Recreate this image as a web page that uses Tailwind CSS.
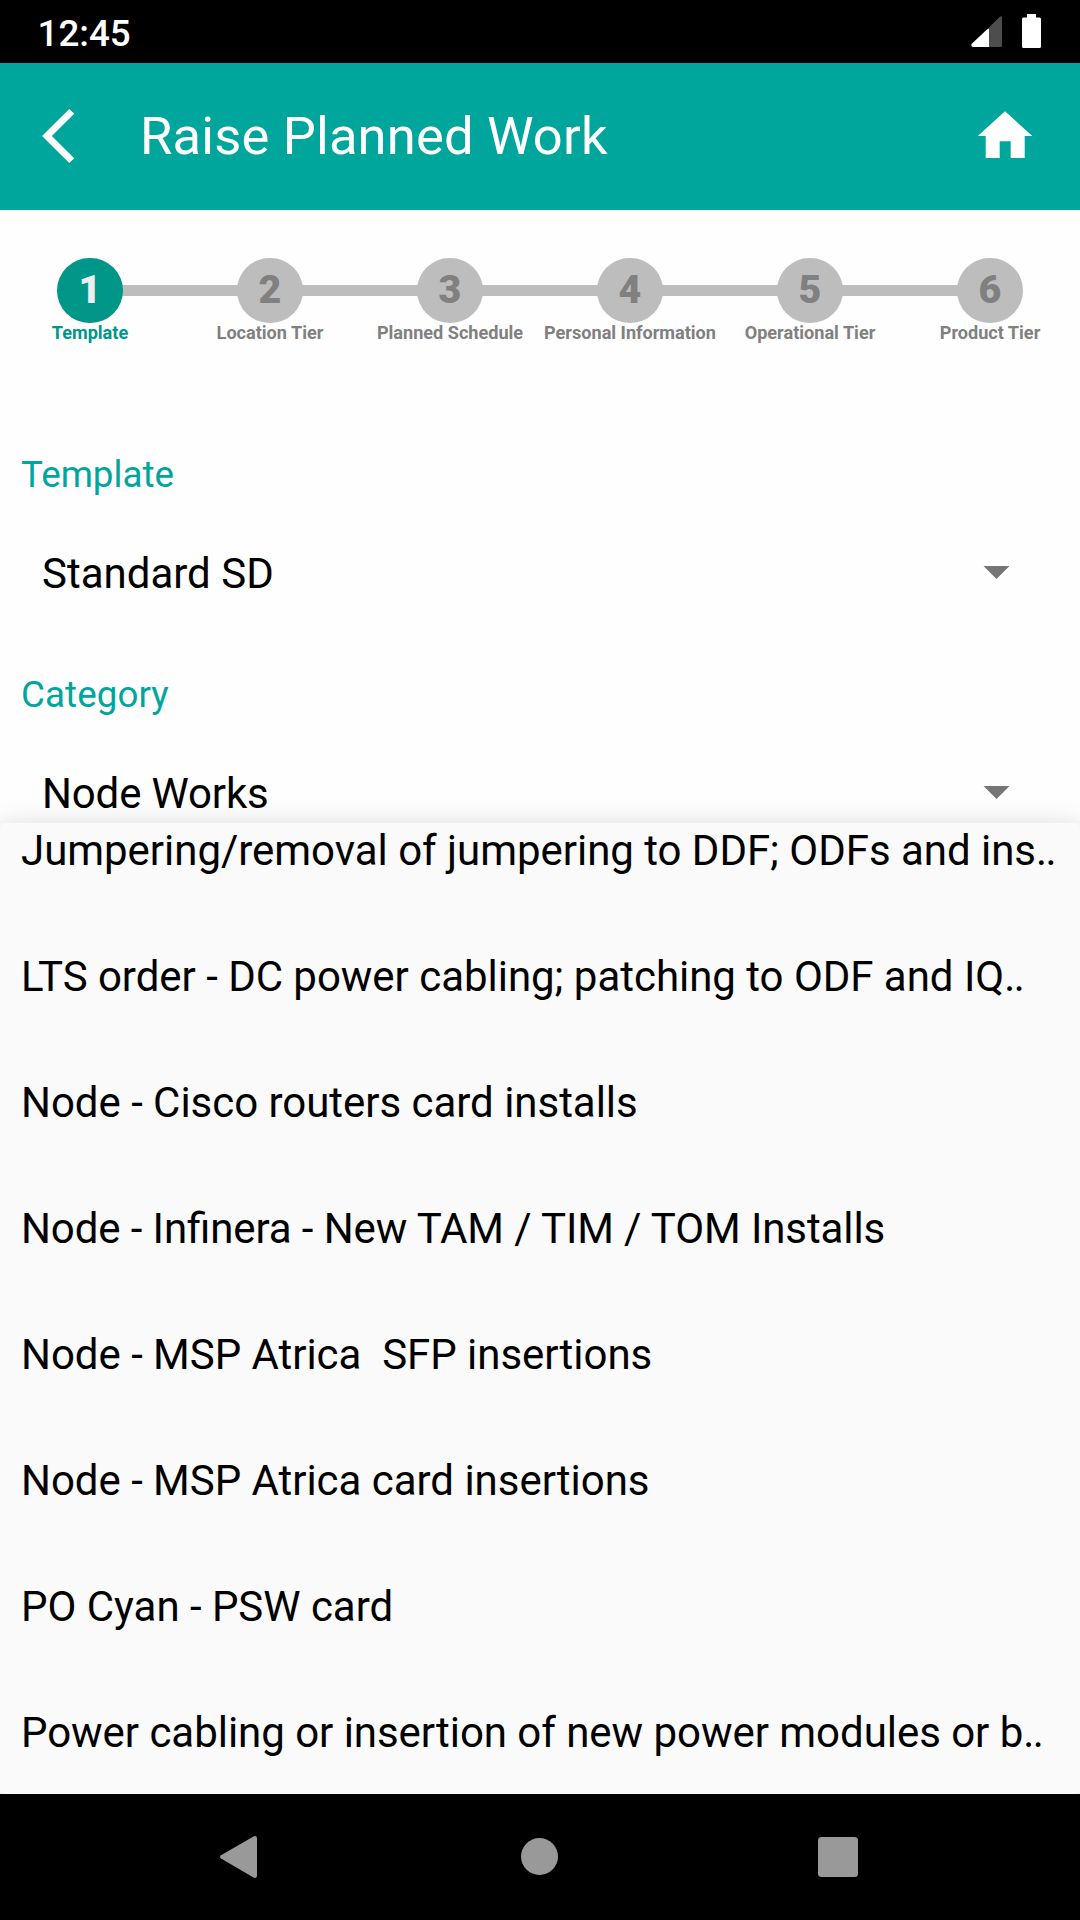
<!DOCTYPE html>
<html lang="en">
<head>
<meta charset="utf-8">
<title>Raise Planned Work</title>
<script src="https://cdn.jsdelivr.net/npm/@tailwindcss/browser@4"></script>
</head>
<body class="bg-black font-['Roboto',sans-serif]">
<div class="relative flex h-[1920px] w-[1080px] flex-col overflow-hidden bg-[#fefefe]">
  <!-- Status bar -->
  <div class="flex h-[63px] shrink-0 items-center justify-between bg-black pl-[37.5px] pr-[38px] text-white">
    <span class="text-[36.75px] leading-[64px] font-medium pt-1">12:45</span>
    <svg class="h-[63px] w-[72px]" viewBox="970 0 72 63" fill="none">
      <path d="M989 28.500V47H972.500Q970.500 46 971.500 44L987.500 29Z" fill="#fff"/>
      <path d="M989 27.500L999.500 17Q1002 15 1002 18V45.500Q1002 47 1000.500 47H989Z" fill="#4d4d4d"/>
      <path d="M1027 14h9v3.500h3.500q1.500 0 1.500 1.500v27.500q0 1.500-1.500 1.500h-16q-1.500 0-1.500-1.500v-27.500q0-1.500 1.500-1.500h3.500z" fill="#fff"/>
    </svg>
  </div>
  <!-- App bar -->
  <header class="flex h-[147px] shrink-0 items-center bg-[#00a69c] pl-[42px] pr-[42px] text-white">
    <svg class="h-[54px] w-8 shrink-0 -mt-px" viewBox="42 109 32 54" fill="#fff"><path d="M69.300 109L42 136L69.300 163L74.200 158.200L51.800 136L74.200 113.800Z"/></svg>
    <h1 class="ml-[66px] grow pb-px text-[52.5px] leading-[60px] tracking-[0.17px]">Raise Planned Work</h1>
    <svg class="h-[147px] w-[65px] shrink-0" viewBox="973 63 65 147" fill="#fff"><path d="M1005 111.300L1032.300 136H1024.700V158H1010.700V141.300H999.700V158H985.700V136H977.800Z"/></svg>
  </header>
  <!-- Steps -->
  <div class="relative h-[210px] shrink-0 pt-[47.5px]">
    <div class="absolute left-[90px] top-[75px] h-[11px] w-[900px] bg-[#bdbdbd]"></div>
    <ol class="relative grid grid-cols-6 text-center text-[18.1px] leading-[20px] font-bold text-[#808080]">
      <li class="flex flex-col items-center whitespace-nowrap text-[#009688]"><b class="size-[65.5px] rounded-full bg-[#009688] text-[39.375px] leading-[64px] text-[#eeeeee]">1</b>Template</li>
      <li class="flex flex-col items-center whitespace-nowrap"><b class="size-[65.5px] rounded-full bg-[#bdbdbd] text-[39.375px] leading-[64px]">2</b>Location Tier</li>
      <li class="flex flex-col items-center whitespace-nowrap"><b class="size-[65.5px] rounded-full bg-[#bdbdbd] text-[39.375px] leading-[64px]">3</b>Planned Schedule</li>
      <li class="flex flex-col items-center whitespace-nowrap"><b class="size-[65.5px] rounded-full bg-[#bdbdbd] text-[39.375px] leading-[64px]">4</b>Personal Information</li>
      <li class="flex flex-col items-center whitespace-nowrap"><b class="size-[65.5px] rounded-full bg-[#bdbdbd] text-[39.375px] leading-[64px]">5</b>Operational Tier</li>
      <li class="flex flex-col items-center whitespace-nowrap"><b class="size-[65.5px] rounded-full bg-[#bdbdbd] text-[39.375px] leading-[64px]">6</b>Product Tier</li>
    </ol>
  </div>
  <!-- Form -->
  <main class="flex h-[1374px] shrink-0 flex-col text-black">
    <div class="h-[220px] px-[21px] pt-[30px]">
      <div class="h-[50px] text-[36.75px] leading-[50px] text-[#00a69c]">Template</div>
      <div class="mt-[22px] flex h-[100px] items-center justify-between pl-[21px] pr-[49px] text-[42px] leading-[100px]">
        <span class="pt-[3px]">Standard SD</span>
        <svg class="h-[13px] w-[27px]" viewBox="0 0 27 13" fill="#757575"><path d="M.5 0h26l-13 13z"/></svg>
      </div>
    </div>
    <div class="h-[220px] px-[21px] pt-[30px]">
      <div class="h-[50px] text-[36.75px] leading-[50px] tracking-[0.08px] text-[#00a69c]">Category</div>
      <div class="mt-[22px] flex h-[100px] items-center justify-between pl-[21px] pr-[49px] text-[42px] leading-[100px]">
        <span class="pt-[3px] tracking-[-0.15px]">Node Works</span>
        <svg class="h-[13px] w-[27px]" viewBox="0 0 27 13" fill="#757575"><path d="M.5 0h26l-13 13z"/></svg>
      </div>
    </div>
  </main>
  <!-- Open dropdown list -->
  <ul class="absolute left-0 top-[823px] flex h-[971px] w-[1080px] flex-col rounded-[5px] bg-[#fafafa] pl-[21px] text-[42px] leading-[126px] tracking-[-0.03px] text-black shadow-[0_0_26px_rgba(0,0,0,0.13)]">
    <li class="-mt-[35px] h-[126px] shrink-0 whitespace-pre">Jumpering/removal of jumpering to DDF; ODFs and ins<span class="tracking-[-1.5px]">..</span></li>
    <li class="h-[126px] shrink-0 whitespace-pre">LTS order - DC power cabling; patching to ODF and IQ<span class="tracking-[-1.5px]">..</span></li>
    <li class="h-[126px] shrink-0 whitespace-pre">Node - Cisco routers card installs</li>
    <li class="h-[126px] shrink-0 whitespace-pre tracking-[-0.1px]">Node - In&#xfb01;nera - New TAM / TIM / TOM Installs</li>
    <li class="h-[126px] shrink-0 whitespace-pre">Node - MSP Atrica  SFP insertions</li>
    <li class="h-[126px] shrink-0 whitespace-pre">Node - MSP Atrica card insertions</li>
    <li class="h-[126px] shrink-0 whitespace-pre">PO Cyan - PSW card</li>
    <li class="h-[126px] shrink-0 whitespace-pre tracking-[-0.04px]">Power cabling or insertion of new power modules or b<span class="tracking-[-1.5px]">..</span></li>
  </ul>
  <!-- Navigation bar -->
  <nav class="relative flex h-[126px] shrink-0 bg-black">
    <svg class="h-[126px] w-[1080px]" viewBox="0 1794 1080 126" fill="#999">
      <path d="M221 1855.200L253.500 1836.400Q257 1835 257 1838.500V1875.500Q257 1879 253.500 1877.600L221 1858.600Q219 1857 221 1855.200Z"/>
      <circle cx="539.500" cy="1856.500" r="18.500"/>
      <rect x="818" y="1837" width="40" height="40" rx="3.500"/>
    </svg>
  </nav>
</div>
</body>
</html>
